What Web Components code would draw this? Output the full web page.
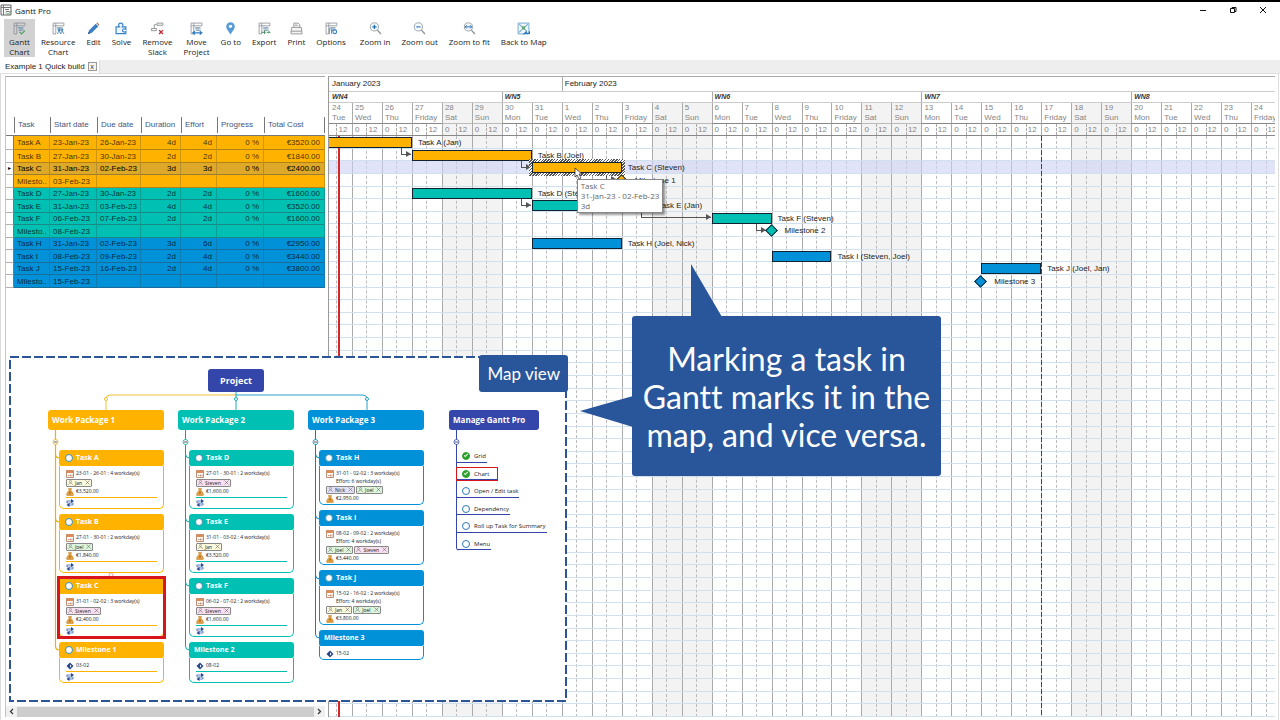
<!DOCTYPE html>
<html lang="en">
<head>
<meta charset="UTF-8">
<title>Gantt Pro</title>
<style>
    html, body {
        margin: 0;
        height: 100%;
        overflow: hidden;
        background: #fff;
    }
    body {
        --ui: "Open Sans", "Noto Sans", sans-serif;
        --grid: "Liberation Sans", Arial, sans-serif;
        --amber: #ffb300;
        --teal: #00bfb3;
        --blue: #0091d9;
        --indigo: #3546ab;
        --navy: #29569b;
        font-family: var(--ui);
        font-size: 8px;
        color: #222;
    }
</style>
</head>
<body>
<gantt-app></gantt-app>

<script>
// ---------- Data ----------
const TASKS = [
    { name: 'Task A', start: '23-Jan-23', due: '26-Jan-23', dur: '4d', effort: '4d', cost: '€3520.00', color: 'amber' },
    { name: 'Task B', start: '27-Jan-23', due: '30-Jan-23', dur: '2d', effort: '2d', cost: '€1840.00', color: 'amber' },
    { name: 'Task C', start: '31-Jan-23', due: '02-Feb-23', dur: '3d', effort: '3d', cost: '€2400.00', color: 'amber', selected: true },
    { name: 'Milestone 1', start: '03-Feb-23', color: 'amber' },
    { name: 'Task D', start: '27-Jan-23', due: '30-Jan-23', dur: '2d', effort: '2d', cost: '€1600.00', color: 'teal' },
    { name: 'Task E', start: '31-Jan-23', due: '03-Feb-23', dur: '4d', effort: '4d', cost: '€3520.00', color: 'teal' },
    { name: 'Task F', start: '06-Feb-23', due: '07-Feb-23', dur: '2d', effort: '2d', cost: '€1600.00', color: 'teal' },
    { name: 'Milestone 2', start: '08-Feb-23', color: 'teal' },
    { name: 'Task H', start: '31-Jan-23', due: '02-Feb-23', dur: '3d', effort: '6d', cost: '€2950.00', color: 'blue' },
    { name: 'Task I', start: '08-Feb-23', due: '09-Feb-23', dur: '2d', effort: '4d', cost: '€3440.00', color: 'blue' },
    { name: 'Task J', start: '15-Feb-23', due: '16-Feb-23', dur: '2d', effort: '4d', cost: '€3800.00', color: 'blue' },
    { name: 'Milestone 3', start: '15-Feb-23', color: 'blue' }
];

// Days are counted from 24 January
const BARS = [
    { row: 0, day: -1, days: 4, color: 'amber', label: 'Task A (Jan)' },
    { row: 1, day: 3, days: 4, color: 'amber', label: 'Task B (Joel)' },
    { row: 2, day: 7, days: 3, color: 'amber', label: 'Task C (Steven)', selected: true },
    { row: 3, day: 10, days: 0, color: 'amber', label: 'Milestone 1' },
    { row: 4, day: 3, days: 4, color: 'teal', label: 'Task D (Steven)' },
    { row: 5, day: 7, days: 4, color: 'teal', label: 'Task E (Jan)' },
    { row: 6, day: 13, days: 2, color: 'teal', label: 'Task F (Steven)' },
    { row: 7, day: 15, days: 0, color: 'teal', label: 'Milestone 2' },
    { row: 8, day: 7, days: 3, color: 'blue', label: 'Task H (Joel, Nick)' },
    { row: 9, day: 15, days: 2, color: 'blue', label: 'Task I (Steven, Joel)' },
    { row: 10, day: 22, days: 2, color: 'blue', label: 'Task J (Joel, Jan)' },
    { row: 11, day: 22, days: 0, color: 'blue', label: 'Milestone 3' }
];

const LINKS = [
    { row: 0, from: 3, to: 3 },
    { row: 1, from: 7, to: 7 },
    { row: 2, from: 10, to: 10, milestone: true },
    { row: 4, from: 7, to: 7 },
    { row: 5, from: 11, to: 13 },
    { row: 6, from: 15, to: 15, milestone: true }
];

const DAY_COUNT = 32;
const ROW_COUNT = 46;
const WEEKDAYS = ['Tue', 'Wed', 'Thu', 'Friday', 'Sat', 'Sun', 'Mon'];

const SHEET = '<path d="M2 2h20v5H2zM2 7v15h5V2M10 11h10M10 15h7" fill="none" stroke="#8a8f96" stroke-width="1.5"/><path d="M9 11h9M12 15h8" stroke="#5b8fbf" stroke-width="1.5"/>';
const LENS = '<circle cx="10" cy="9" r="7.5" fill="#f7fafc" stroke="#8d9299" stroke-width="1.5"/><path d="M15.500 15l6.500 7" stroke="#8d9299" stroke-width="2.500"/>';

const ICONS = {
    gantt: SHEET + '<path d="M12 18l4 4 6-6" fill="none" stroke="#4f9a63" stroke-width="2"/>',
    resource: SHEET + '<path d="M10 22l3-6 3 6M16 22l3-6 3 6" fill="none" stroke="#3b86c4" stroke-width="1.600"/><circle cx="13" cy="14" r="2" fill="#3b86c4"/><circle cx="19" cy="14" r="2" fill="#3b86c4"/>',
    edit: '<path d="M2 22l2-7L16 3l5 5L9 20z" fill="#3c7fc6"/><path d="M17 2l2-1 4 4-1 2z" fill="#a5724a"/><path d="M2 22l1-4 3 3z" fill="#27517f"/>',
    solve: '<path d="M2 21.500V9h6C5 5 7 2 10.500 2S16 5 13.500 9H20v4.500c-3-2-6-.5-6 2s3 4 6 2v4z" fill="#eef5fc" stroke="#3a84c9" stroke-width="2.200"/>',
    slack: '<path d="M11 2h11v4H11zM1 12h9v4H1zM6 11V5h4" fill="none" stroke="#8a8a8a" stroke-width="1.600"/><path d="M15 15l7 7M22 15l-7 7" stroke="#c32530" stroke-width="2.500"/>',
    move: SHEET + '<path d="M6 20h15M9 17l-4 3 4 3M18 17l4 3-4 3" fill="none" stroke="#2f7cc4" stroke-width="2"/>',
    goto: '<path d="M12 23C8 17 4 13 4 8.500a8 8 0 0 1 16 0C20 13 16 17 12 23z" fill="#559bd8"/><circle cx="12" cy="8" r="3" fill="#fff"/>',
    export: SHEET + '<path d="M6 19h8M12 16v6M16 19h6M20 17l2 2-2 2" fill="none" stroke="#3f8a5b" stroke-width="1.800"/>',
    print: '<path d="M7 10V2h8l3 3v5M3 10h18l1 8v4H2v-4zM2 17h20M9 6h5" fill="#f4f4f4" stroke="#86898c" stroke-width="1.500"/>',
    options: SHEET + '<circle cx="18" cy="18" r="3.500" fill="#fff" stroke="#2f7cc4" stroke-width="2"/><path d="M8 11v11M12 13v9" stroke="#777" stroke-width="1.500"/>',
    zoomin: LENS + '<path d="M10 5v8M6 9h8" stroke="#2472b8" stroke-width="2.500"/>',
    zoomout: LENS + '<path d="M6 9h8" stroke="#2472b8" stroke-width="2"/>',
    zoomfit: LENS + '<path d="M4 9h12M7 6L4 9l3 3M13 6l3 3-3 3" fill="none" stroke="#2472b8" stroke-width="1.800"/>',
    map: '<path d="M2 2h20v20H2z" fill="#f1f8fc" stroke="#5c9ac9" stroke-width="1.500"/><path d="M4 4l5 5M20 4l-5 5M4 19l5-5M14 13l4 4" stroke="#7aaacb" stroke-width="2"/><rect x="9" y="8" width="6" height="6" fill="#62a874"/><path d="M12 23l5-5v3h6v-4" fill="none" stroke="#2472b8" stroke-width="2"/>'
};

const TOOLS = [
    ['gantt', 'Gantt<br>Chart'], ['resource', 'Resource<br>Chart'], ['edit', 'Edit'], ['solve', 'Solve'],
    ['slack', 'Remove<br>Slack'], ['move', 'Move<br>Project'], ['goto', 'Go to'], ['export', 'Export'],
    ['print', 'Print'], ['options', 'Options']
];

const ZOOM_TOOLS = [
    ['zoomin', 'Zoom in'], ['zoomout', 'Zoom out'], ['zoomfit', 'Zoom to fit'], ['map', 'Back to Map']
];

// ---------- Title bar ----------
class TitleBar extends HTMLElement {
    constructor() {
        super();
        this.attachShadow({ mode: 'open' });
        this.shadowRoot.innerHTML = `
            <style>
                :host {
                    display: flex;
                    align-items: center;
                    height: 16px;
                    border-top: 2px solid #000;
                    gap: 3px;
                }
                .logo { width: 12px; height: 12px; }
                h1 { flex: 1; margin: 0; font-size: 8px; font-weight: 400; color: #111; }
                button {
                    width: 30px;
                    height: 14px;
                    padding: 0;
                    border: 0;
                    background: none;
                }
                button svg { display: block; margin: auto; width: 8px; height: 8px; }
                nav { display: flex; margin-right: 2px; }
            </style>
            <svg class="logo" viewBox="0 0 24 24"><path d="M2 2h20v20H2z" fill="#fafafa" stroke="#666" stroke-width="2"/>
                <path d="M7 2v20M2 7h20M10 11h8M12 15h7" stroke="#777" stroke-width="2"/><path d="M12 17l4 4 7-7" stroke="#4f9a63" fill="none" stroke-width="2"/></svg>
            <h1><slot></slot></h1>
            <nav>
                <button aria-label="Minimize"><svg viewBox="0 0 8 8"><path d="M1 4.500h6" stroke="#111"/></svg></button>
                <button aria-label="Restore"><svg viewBox="0 0 8 8"><path d="M1.500 2.500h4v4h-4zM3 2.500v-1h4v4H6" fill="none" stroke="#111"/></svg></button>
                <button aria-label="Close"><svg viewBox="0 0 8 8"><path d="M1 1l6 6M7 1L1 7" stroke="#111"/></svg></button>
            </nav>
        `;
    }
}
customElements.define('title-bar', TitleBar);

// ---------- Toolbar ----------
class ToolButton extends HTMLElement {
    constructor() {
        super();
        this.attachShadow({ mode: 'open' });
    }

    connectedCallback() {
        this.shadowRoot.innerHTML = `
            <style>
                :host { display: block; }
                button {
                    display: flex;
                    flex-direction: column;
                    align-items: center;
                    width: 100%;
                    height: 38px;
                    padding: 3px 5px 0;
                    border: 0;
                    background: none;
                    font: 8px/10px var(--ui);
                    color: #222;
                    white-space: nowrap;
                }
                :host([active]) button { background: #d2d2d2; }
                svg { width: 13px; height: 13px; margin-bottom: 2px; }
            </style>
            <button><svg viewBox="0 0 24 24">${ICONS[this.getAttribute('icon')]}</svg><span><slot></slot></span></button>
        `;
    }
}
customElements.define('tool-button', ToolButton);

class ToolBar extends HTMLElement {
    constructor() {
        super();
        this.attachShadow({ mode: 'open' });
        const tool = ([icon, label]) => `<tool-button icon="${icon}" ${icon === 'gantt' ? 'active' : ''}>${label}</tool-button>`;
        this.shadowRoot.innerHTML = `
            <style>
                :host { display: flex; gap: 4px; padding: 1px 4px 3px; }
                div { display: flex; gap: 1px; }
            </style>
            <div>${TOOLS.map(tool).join('')}</div>
            <div>${ZOOM_TOOLS.map(tool).join('')}</div>
        `;
    }
}
customElements.define('tool-bar', ToolBar);

class TabStrip extends HTMLElement {
    constructor() {
        super();
        this.attachShadow({ mode: 'open' });
        this.shadowRoot.innerHTML = `
            <style>
                :host { display: flex; height: 13px; background: #eee; border-bottom: 1px solid #e0e0e0; }
                .tab {
                    display: flex;
                    align-items: center;
                    gap: 3px;
                    padding: 0 2px 0 5px;
                    background: #fff;
                    border-right: 1px solid #ddd;
                    font: 8px var(--grid);
                    letter-spacing: normal;
                }
                button {
                    width: 9px;
                    height: 9px;
                    padding: 0;
                    border: 1px solid #999;
                    background: #f4f4f4;
                    font: 7px/7px var(--ui);
                    color: #333;
                }
            </style>
            <div class="tab"><span><slot></slot></span><button aria-label="Close tab">x</button></div>
        `;
    }
}
customElements.define('tab-strip', TabStrip);

// ---------- Task table (left pane) ----------
class TaskTable extends HTMLElement {
    constructor() {
        super();
        this.attachShadow({ mode: 'open' });
        this.shadowRoot.innerHTML = `
            <style>
                :host {
                    display: flex;
                    flex-direction: column;
                    border-left: 1px solid #c4c4c4;
                    border-top: 1px solid #aaa;
                    font: 8px/10px var(--grid);
                }
                .sheet { flex: 1; padding-top: 39px; }
                table { width: 100%; border-collapse: separate; border-spacing: 0; table-layout: fixed; }
                th, td { padding: 0; overflow: hidden; white-space: nowrap; box-sizing: border-box; }
                th {
                    height: 20px;
                    font-weight: 400;
                    text-align: left;
                    color: #46557c;
                    border-bottom: 1px solid #777;
                }
                th span { display: block; line-height: 16px; padding-left: 3px; border-left: 1px solid #777; margin: 1px 0 2px; }
                th:last-child span { border-right: 1px solid #777; }
                th:first-child span { border: 0; }
                tr { height: 12px; }
                tbody tr:nth-child(even) { height: 13px; }
                tbody tr:first-child { height: 14px; }
                td {
                    height: inherit;
                    line-height: 11px;
                    color: rgba(0, 0, 0, .75);
                    border-bottom: 1px solid rgba(60, 60, 60, .4);
                    border-right: 1px solid rgba(60, 60, 60, .25);
                }
                td:first-child { background: #fff; border-right-color: #777; font-size: 6px; text-align: center; }
                td:nth-child(n + 2) { padding-left: 3px; }
                td.num { text-align: right; padding-right: 4px; }
                tr.amber td { background: var(--amber); }
                tr.teal td { background: var(--teal); }
                tr.blue td { background: var(--blue); }
                tr.selected td { background: #dea828; color: #000; }
                tbody tr td:first-child { background: #fff; }
                .scroll { display: flex; align-items: center; height: 11px; background: #f0f0f0; }
                .scroll button { width: 11px; height: 11px; padding: 0; border: 0; background: none; }
                .scroll svg { display: block; margin: auto; width: 5px; height: 7px; }
                .thumb { flex: 1; height: 10px; background: #cdcdcd; }
            </style>
            <div class="sheet">
                <table>
                    <colgroup>
                        <col style="width:8px"><col style="width:36px"><col style="width:47px"><col style="width:44px">
                        <col style="width:40px"><col style="width:36px"><col style="width:47px"><col>
                    </colgroup>
                    <thead><tr>
                        <th><span></span></th><th><span>Task</span></th><th><span>Start date</span></th><th><span>Due date</span></th>
                        <th><span>Duration</span></th><th><span>Effort</span></th><th><span>Progress</span></th><th><span>Total Cost</span></th>
                    </tr></thead>
                    <tbody>${TASKS.map(t => this.row(t)).join('')}</tbody>
                </table>
            </div>
            <div class="scroll">
                <button aria-label="Scroll left"><svg viewBox="0 0 5 7"><path d="M4 1L1.500 3.500 4 6" fill="none" stroke="#333" stroke-width="1.200"/></svg></button>
                <div class="thumb"></div>
                <button aria-label="Scroll right"><svg viewBox="0 0 5 7"><path d="M1 1l2.500 2.500L1 6" fill="none" stroke="#333" stroke-width="1.200"/></svg></button>
            </div>
        `;
    }

    row(t) {
        const name = t.due ? t.name : 'Milesto..';
        return `<tr class="${t.color} ${t.selected ? 'selected' : ''}">
            <td>${t.selected ? '▸' : ''}</td><td>${name}</td><td>${t.start}</td><td>${t.due || ''}</td>
            <td class="num">${t.dur || ''}</td><td class="num">${t.effort || ''}</td>
            <td class="num">${t.due ? '0 %' : ''}</td><td class="num">${t.cost || ''}</td></tr>`;
    }
}
customElements.define('task-table', TaskTable);

// ---------- Gantt bar, milestone and link ----------
class GanttBar extends HTMLElement {
    constructor() {
        super();
        this.attachShadow({ mode: 'open' });
        this.shadowRoot.innerHTML = `
            <style>
                :host {
                    position: absolute;
                    display: flex;
                    align-items: center;
                    box-sizing: border-box;
                    left: calc(var(--day) * 100% / ${DAY_COUNT});
                    top: calc(var(--row) * 100% / ${ROW_COUNT} + 1px);
                    width: calc(var(--days) * 100% / ${DAY_COUNT});
                    height: 11px;
                    font: 8px/11px var(--grid);
                    color: #222;
                }
                .bar {
                    flex: none;
                    width: 100%;
                    height: 100%;
                    box-sizing: border-box;
                    border: 1px solid #123;
                    background: var(--color);
                }
                :host([selected]) .bar { position: relative; }
                :host([selected])::before {
                    content: "";
                    position: absolute;
                    inset: -3px;
                    background: repeating-linear-gradient(135deg, #555 0 1px, #fff 1px 2px);
                }
                :host([milestone]) .bar {
                    width: 9px;
                    height: 9px;
                    margin-left: -5px;
                    transform: rotate(45deg);
                }
                .label { flex: none; white-space: nowrap; padding-left: 6px; }
                :host([milestone]) .label { padding-left: 9px; }
            </style>
            <div class="bar"></div><span class="label"><slot></slot></span>
        `;
    }
}
customElements.define('gantt-bar', GanttBar);

class GanttLink extends HTMLElement {
    constructor() {
        super();
        this.attachShadow({ mode: 'open' });
        this.shadowRoot.innerHTML = `
            <style>
                :host {
                    position: absolute;
                    box-sizing: border-box;
                    left: calc(var(--from) * 100% / ${DAY_COUNT} - 11px);
                    top: calc(var(--row) * 100% / ${ROW_COUNT} + 12px);
                    width: calc((var(--to) - var(--from)) * 100% / ${DAY_COUNT} + 10px);
                    height: 7px;
                    border: solid #555;
                    border-width: 0 0 1px 1px;
                }
                :host([milestone]) { margin-left: -5px; }
                i {
                    position: absolute;
                    right: 0;
                    bottom: -3px;
                    border: solid transparent;
                    border-width: 3px 0 3px 5px;
                    border-left-color: #555;
                }
            </style><i></i>
        `;
    }
}
customElements.define('gantt-link', GanttLink);

// ---------- Gantt chart (right pane) ----------
class GanttChart extends HTMLElement {
    constructor() {
        super();
        this.attachShadow({ mode: 'open' });

        let days = '', hours = '', cols = '', rows = '';
        for (let i = 0; i < DAY_COUNT; i++) {
            const num = i < 8 ? 24 + i : i - 7;
            const off = i % 7 === 4 || i % 7 === 5 ? 'off' : '';
            days += `<div class="${off}">${num}<br>${WEEKDAYS[i % 7]}</div>`;
            hours += `<div class="${off}"><span>${i ? 0 : ''}</span><span>12</span></div>`;
            cols += `<div class="${off}"><i></i></div>`;
        }
        for (let i = 0; i < ROW_COUNT; i++) {
            rows += `<div class="${i === 2 ? 'current' : ''}"></div>`;
        }

        this.shadowRoot.innerHTML = `
            <style>
                :host {
                    display: flex;
                    flex-direction: column;
                    overflow: hidden;
                    border-top: 1px solid #aaa;
                    border-left: 1px solid #999;
                    font: 8px/10px var(--grid);
                }
                .line { display: grid; grid-template-columns: repeat(${DAY_COUNT}, 1fr); margin: 0 -6px 0 -7px; flex: none; }
                .line > div { box-sizing: border-box; padding-left: 2px; white-space: nowrap; border-left: 1px solid #aaa; min-width: 0; }
                .line > div:first-child { padding-left: 9px; }
                .months, .weeks { border-bottom: 1px solid #ccc; }
                .months { line-height: 14px; }
                .weeks { line-height: 10px; font-style: italic; font-weight: 700; font-size: 7px; color: #333; }
                .days { color: #858585; }
                .days > div { border-bottom: 1px solid #888; }
                .days > .off { border-bottom-color: #bbb; }
                .hours { color: #858585; border-bottom: 1px solid #888; }
                .hours > div { display: flex; line-height: 11px; padding: 0; }
                .hours > div:first-child { padding: 0; }
                .hours span { flex: 1; border-left: 1px dashed #aaa; margin-left: -2px; padding-left: 1px; }
                .hours span:first-child { border: 0; margin: 0; padding-left: 2px; }
                .off { background: #f3f3f3; }
                .body { flex: 1; display: grid; margin: 0 -6px 0 -7px; }
                .layer { grid-area: 1 / 1; display: grid; position: relative; }
                .cols { grid-template-columns: repeat(${DAY_COUNT}, 1fr); }
                .cols > div { border-left: 1px solid #aaa; }
                .cols i { display: block; height: 100%; width: 50%; box-sizing: border-box; border-right: 1px dashed #bbb; }
                .rows { grid-template-rows: repeat(${ROW_COUNT}, 1fr); }
                .rows > div { border-bottom: 1px solid #d0e0ec; min-height: 0; }
                .rows .current { background: rgba(205, 210, 245, .6); }
                .now, .end { position: absolute; top: 0; bottom: 0; left: calc(var(--day) * 100% / ${DAY_COUNT}); }
                .now { margin-left: 16px; border-left: 2px solid #d3262b; }
                .end { width: 1px; background: repeating-linear-gradient(#3a31c8 0 5px, #c9c6f2 5px 7px); }
                .tip {
                    position: absolute;
                    left: calc(10 * 100% / ${DAY_COUNT} - 45px);
                    top: 43px;
                    padding: 1px 3px;
                    border: 1px solid #888;
                    background: #fff;
                    box-shadow: 2px 2px 2px rgba(0, 0, 0, .4);
                    font: 8px/10px var(--ui);
                    color: #666;
                    white-space: nowrap;
                }
                .cursor { position: absolute; left: calc(10 * 100% / ${DAY_COUNT} - 48px); top: 31px; width: 9px; height: 13px; }
            </style>
            <div class="line months">
                <div style="grid-column: span 8">January 2023</div>
                <div style="grid-column: span 24">February 2023</div>
            </div>
            <div class="line weeks">
                <div style="grid-column: span 6">WN4</div>
                <div style="grid-column: span 7">WN5</div>
                <div style="grid-column: span 7">WN6</div>
                <div style="grid-column: span 7">WN7</div>
                <div style="grid-column: span 5">WN8</div>
            </div>
            <div class="line days">${days}</div>
            <div class="line hours">${hours}</div>
            <div class="body">
                <div class="layer cols">${cols}</div>
                <div class="layer rows">${rows}</div>
                <div class="layer">
                    <div class="now" style="--day: 0"></div>
                    <div class="end" style="--day: 24"></div>
                    ${LINKS.map(l => `<gantt-link ${l.milestone ? 'milestone' : ''} style="--row:${l.row};--from:${l.from};--to:${l.to}"></gantt-link>`).join('')}
                    ${BARS.map(b => `<gantt-bar ${b.selected ? 'selected' : ''} ${b.days ? '' : 'milestone'}
                        style="--row:${b.row};--day:${b.day};--days:${b.days};--color:var(--${b.color})">${b.label}</gantt-bar>`).join('')}
                    <div class="tip" role="tooltip">Task C<br>31-Jan-23 - 02-Feb-23<br>3d</div>
                    <svg class="cursor" viewBox="0 0 9 13"><path d="M1 1v9l2-2 2 4 2-1-2-4h3z" fill="#fff" stroke="#333" stroke-width=".8"/></svg>
                </div>
            </div>
        `;
    }
}
customElements.define('gantt-chart', GanttChart);

// ---------- Map cards ----------
const CALENDAR = '<svg viewBox="0 0 16 16"><path d="M1 1h14v14H1z" fill="#fff" stroke="#a9694a" stroke-width="1.500"/><path d="M1 1h14v5H1z" fill="#d98c58"/><path d="M4 11h3M9 9v4M12 9v4" stroke="#a9694a" stroke-width="1.500"/></svg>';
const MONEY = '<svg viewBox="0 0 16 16"><path d="M5 1h6l-1 4c4 3 6 10 4 10H2C0 15 2 8 6 5z" fill="#e3a03c" stroke="#b97a28"/><path d="M8 7v6M6 9h4" stroke="#8a5a1a"/></svg>';
const DEPEND = '<svg viewBox="0 0 16 16"><path d="M1 4h11M2 4v4h12v4H5" fill="none" stroke="#5f83bd" stroke-width="2"/><path d="M10 0l6 4-6 4zM7 8l-6 4 6 4z" fill="#27468a"/></svg>';
const DIAMOND = '<svg viewBox="0 0 16 16"><path d="M8 1l7 7-7 7-7-7z" fill="#27468a"/><path d="M8 5l3 3-3 3z" fill="#fff"/></svg>';

class PersonTag extends HTMLElement {
    constructor() {
        super();
        this.attachShadow({ mode: 'open' });
        this.shadowRoot.innerHTML = `
            <style>
                :host {
                    display: flex;
                    align-items: center;
                    height: 8px;
                    box-sizing: border-box;
                    padding: 0 1px;
                    border: 1px solid #888;
                    border-radius: 1px;
                    gap: 2px;
                    font-size: 5px;
                    line-height: 6px;
                    background: var(--tint);
                }
                svg { width: 5px; height: 5px; }
                button { width: 5px; height: 5px; padding: 0; border: 0; background: none; display: flex; margin-left: 1px; }
            </style>
            <svg viewBox="0 0 10 10"><circle cx="5" cy="3" r="2" fill="none" stroke="#666"/><path d="M1 10c0-5 8-5 8 0" fill="none" stroke="#666"/></svg>
            <slot></slot>
            <button aria-label="Remove"><svg viewBox="0 0 10 10"><path d="M1 1l8 8M9 1L1 9" stroke="#555"/></svg></button>
        `;
    }
}
customElements.define('person-tag', PersonTag);

const TINTS = { Jan: '#fdf9dc', Joel: '#dcf5dc', Steven: '#f8e0f0', Nick: '#e3e1f8' };

class MapCard extends HTMLElement {
    constructor() {
        super();
        this.attachShadow({ mode: 'open' });
    }

    connectedCallback() {
        const get = name => this.getAttribute(name);
        const people = get('people') ? get('people').split(',') : [];
        const title = get('check') === null
            ? `<span>${get('name')}</span>`
            : `<label><input type="checkbox">${get('name')}</label>`;

        this.shadowRoot.innerHTML = `
            <style>
                :host { display: block; background: #fff; font-size: 5px; line-height: 9px; color: #222; border-radius: 4px; }
                :host([marked]) { outline: 3px solid #d8141c; outline-offset: -1px; border-radius: 0; }
                header {
                    height: 16px;
                    padding: 0 5px;
                    border-radius: 3px 3px 2px 2px;
                    background: var(--color);
                    color: #fff;
                    font-size: 7px;
                    font-weight: 700;
                    line-height: 16px;
                }
                label { display: flex; align-items: center; gap: 3px; padding-left: 1px; }
                input {
                    appearance: none;
                    box-sizing: border-box;
                    width: 8px;
                    height: 8px;
                    margin: 0;
                    border: 1px solid #3a8fae;
                    border-radius: 50%;
                    background: #fff;
                }
                .body {
                    padding: 3px 6px 1px;
                    border: 1px solid var(--color);
                    border-top: 0;
                    border-radius: 0 0 5px 5px;
                }
                .row { display: flex; align-items: center; height: 9px; gap: 2px; white-space: nowrap; }
                .row svg { width: 8px; height: 8px; }
                .effort { height: 7px; padding-left: 10px; line-height: 7px; }
                .people { gap: 1px; }
                .deps { margin-top: 1px; border-top: 1px solid var(--color); }
            </style>
            <header>${title}</header>
            <div class="body">
                <div class="row">${get('cost') ? CALENDAR : DIAMOND}<span>${get('date')}</span></div>
                ${get('effort') ? `<div class="effort">Effort: ${get('effort')} workday(s)</div>` : ''}
                ${people.length ? `<div class="row people">${people.map(p => `<person-tag style="--tint:${TINTS[p]}">${p}</person-tag>`).join('')}</div>` : ''}
                ${get('cost') ? `<div class="row">${MONEY}<span>${get('cost')}</span></div>` : ''}
                ${get('deps') !== null ? `<div class="row deps">${DEPEND}</div>` : ''}
            </div>
        `;
    }
}
customElements.define('map-card', MapCard);

class MapBranch extends HTMLElement {
    constructor() {
        super();
        this.attachShadow({ mode: 'open' });
    }

    connectedCallback() {
        this.shadowRoot.innerHTML = `
            <style>
                :host { display: block; width: 116px; }
                h3 {
                    margin: 0;
                    height: 20px;
                    padding: 0 4px;
                    border-radius: 3px;
                    background: var(--color);
                    color: #fff;
                    font-size: 8px;
                    line-height: 20px;
                    white-space: nowrap;
                }
                .cards { display: flex; flex-direction: column; gap: 5px; margin: 20px 0 0 11px; }
            </style>
            <h3>${this.getAttribute('name')}</h3>
            <div class="cards"><slot></slot></div>
        `;
    }
}
customElements.define('map-branch', MapBranch);

class TopicList extends HTMLElement {
    constructor() {
        super();
        this.attachShadow({ mode: 'open' });
        const topics = ['Grid', 'Chart', 'Open / Edit task', 'Dependency', 'Roll up Task for Summary', 'Menu'];
        this.shadowRoot.innerHTML = `
            <style>
                :host { display: block; width: 90px; }
                h3 {
                    margin: 0;
                    height: 20px;
                    padding: 0 4px;
                    border-radius: 3px;
                    background: var(--indigo);
                    color: #fff;
                    font-size: 8px;
                    line-height: 20px;
                    white-space: nowrap;
                }
                ul {
                    display: grid;
                    grid-template-rows: repeat(6, 1fr);
                    justify-items: start;
                    align-items: end;
                    height: 105px;
                    margin: 15px 0 0 8px;
                    padding: 0;
                    list-style: none;
                }
                label {
                    display: flex;
                    align-items: center;
                    gap: 4px;
                    height: 11px;
                    padding: 0 1px 0 5px;
                    border-bottom: 1px solid var(--indigo);
                    font-size: 6px;
                    white-space: nowrap;
                }
                .marked { outline: 1px solid #d8141c; padding-right: 8px; }
                input {
                    appearance: none;
                    box-sizing: border-box;
                    width: 8px;
                    height: 8px;
                    margin: 0;
                    border: 1px solid #2c78b8;
                    border-radius: 50%;
                }
                input:checked { border-color: #2da12d; background: #2da12d; position: relative; }
                input:checked::after {
                    content: "";
                    position: absolute;
                    left: 1px;
                    top: 1px;
                    width: 3px;
                    height: 1px;
                    border: solid #fff;
                    border-width: 0 0 1px 1px;
                    transform: rotate(-45deg);
                }
            </style>
            <h3>Manage Gantt Pro</h3>
            <ul>${topics.map((t, i) => `<li><label class="${i === 1 ? 'marked' : ''}"><input type="checkbox" ${i < 2 ? 'checked' : ''}>${t}</label></li>`).join('')}</ul>
        `;
    }
}
customElements.define('topic-list', TopicList);

// ---------- Map view ----------
class MapView extends HTMLElement {
    constructor() {
        super();
        this.attachShadow({ mode: 'open' });
        const fold = (x, color) => `<circle cx="${x}" cy="85" r="2.500" fill="#fff" stroke="${color}" stroke-width=".8"/><path d="M${x - 1.5} 85h3" stroke="#333" stroke-width=".8"/>`;
        this.shadowRoot.innerHTML = `
            <style>
                :host { display: block; position: relative; background: #fff; padding: 12px 27px 18px 38px; }
                .lines, .frame { position: absolute; left: 0; top: 0; width: 100%; height: 100%; overflow: visible; }
                h2 {
                    position: relative;
                    width: 56px;
                    height: 23px;
                    margin: 0 0 18px 160px;
                    border-radius: 3px;
                    background: var(--indigo);
                    color: #fff;
                    font-size: 9px;
                    line-height: 23px;
                    text-align: center;
                }
                .branches { position: relative; display: flex; gap: 14px; align-items: flex-start; }
                topic-list { margin-left: 11px; }
                .name {
                    position: absolute;
                    right: -2px;
                    top: -2px;
                    padding: 0 8px;
                    border-radius: 3px;
                    background: var(--navy);
                    color: #fff;
                    font: 17px/37px Lato, sans-serif;
                }
            </style>
            <svg class="lines" fill="none">
                <path d="M226 38H100q-4 0-4 4v12" stroke="#f0c030"/>
                <path d="M226 38h127q4 0 4 4v12" stroke="#2a9fc8"/>
                <path d="M226 34v20" stroke="#16b0b0"/>
                <circle cx="96" cy="42" r="1.500" fill="#fff" stroke="#f0c030"/>
                <circle cx="226" cy="42" r="1.500" fill="#fff" stroke="#16b0b0"/>
                <circle cx="357" cy="42" r="1.500" fill="#fff" stroke="#2a9fc8"/>
                <path d="M45.500 72v217q0 4 4 4M45.500 97q0 4 4 4M45.500 161q0 4 4 4" stroke="#f0ac10" stroke-width="1.200"/>
                <path d="M175.500 72v217q0 4 4 4M175.500 97q0 4 4 4M175.500 161q0 4 4 4M175.500 225q0 4 4 4" stroke="#00aaa0"/>
                <path d="M305.500 72v205q0 4 4 4M305.500 97q0 4 4 4M305.500 158q0 4 4 4M305.500 218q0 4 4 4" stroke="#0082c8"/>
                <path d="M446.500 72v119q0 2 2 2" stroke="#3546ab"/>
                <circle cx="101" cy="218" r="2" stroke="#e8a0a0"/>
                ${fold(45.5, '#f0ac10')}${fold(175.5, '#00aaa0')}${fold(305.5, '#0082c8')}${fold(446.5, '#3546ab')}
            </svg>
            <svg class="frame"><rect width="100%" height="100%" fill="none" stroke="#2b5594" stroke-width="2" stroke-dasharray="9 3"/></svg>
            <h2>Project</h2>
            <div class="branches">
                <map-branch name="Work Package 1" style="--color: var(--amber)">
                    <map-card check deps name="Task A" date="23-01 - 26-01 : 4 workday(s)" people="Jan" cost="€3,520.00"></map-card>
                    <map-card check deps name="Task B" date="27-01 - 30-01 : 2 workday(s)" people="Joel" cost="€1,840.00"></map-card>
                    <map-card check deps marked name="Task C" date="31-01 - 02-02 : 3 workday(s)" people="Steven" cost="€2,400.00"></map-card>
                    <map-card check deps name="Milestone 1" date="03-02"></map-card>
                </map-branch>
                <map-branch name="Work Package 2" style="--color: var(--teal)">
                    <map-card check deps name="Task D" date="27-01 - 30-01 : 2 workday(s)" people="Steven" cost="€1,600.00"></map-card>
                    <map-card check deps name="Task E" date="31-01 - 03-02 : 4 workday(s)" people="Jan" cost="€3,520.00"></map-card>
                    <map-card check deps name="Task F" date="06-02 - 07-02 : 2 workday(s)" people="Steven" cost="€1,600.00"></map-card>
                    <map-card deps name="Milestone 2" date="08-02"></map-card>
                </map-branch>
                <map-branch name="Work Package 3" style="--color: var(--blue)">
                    <map-card check name="Task H" date="31-01 - 02-02 : 3 workday(s)" effort="6" people="Nick,Joel" cost="€2,950.00"></map-card>
                    <map-card check name="Task I" date="08-02 - 09-02 : 2 workday(s)" effort="4" people="Joel,Steven" cost="€3,440.00"></map-card>
                    <map-card check name="Task J" date="15-02 - 16-02 : 2 workday(s)" effort="4" people="Jan,Joel" cost="€3,800.00"></map-card>
                    <map-card name="Milestone 3" date="15-02"></map-card>
                </map-branch>
                <topic-list></topic-list>
            </div>
            <div class="name">Map view</div>
        `;
    }
}
customElements.define('map-view', MapView);

// ---------- Speech bubble with two pointers ----------
class CallOut extends HTMLElement {
    constructor() {
        super();
        this.attachShadow({ mode: 'open' });
        this.shadowRoot.innerHTML = `
            <style>
                :host {
                    display: block;
                    box-sizing: border-box;
                    width: 309px;
                    padding: 24px 0 22px;
                    border-radius: 3px;
                    background: var(--navy);
                    color: #fff;
                    font: 32px/38px Lato, sans-serif;
                    font-variant-ligatures: none;
                    text-align: center;
                    white-space: nowrap;
                }
                svg { position: absolute; left: -52px; top: -52px; width: 142px; height: 163px; fill: var(--navy); }
            </style>
            <svg viewBox="0 0 142 163"><path d="M111 0v53h31zM0 147l53-15v31z"/></svg>
            <slot></slot>
        `;
    }
}
customElements.define('call-out', CallOut);

// ---------- Window ----------
class GanttApp extends HTMLElement {
    constructor() {
        super();
        this.attachShadow({ mode: 'open' });
        this.shadowRoot.innerHTML = `
            <style>
                :host { display: flex; flex-direction: column; height: 100vh; }
                main {
                    flex: 1;
                    min-height: 0;
                    display: grid;
                    grid-template-columns: 320px minmax(0, 1fr);
                    gap: 3px;
                    padding: 2px 3px 3px 4px;
                    border: solid #ddd;
                    border-width: 0 1px 0 1px;
                    margin-right: 1px;
                }
                map-view { position: absolute; left: 10px; top: 357px; }
                call-out { position: absolute; left: 632px; top: 316px; }
            </style>
            <title-bar>Gantt Pro</title-bar>
            <tool-bar></tool-bar>
            <tab-strip>Example 1 Quick build</tab-strip>
            <main>
                <task-table></task-table>
                <gantt-chart></gantt-chart>
            </main>
            <map-view></map-view>
            <call-out>Marking a task in<br>Gantt marks it in the<br>map, and vice versa.</call-out>
        `;
    }
}
customElements.define('gantt-app', GanttApp);
</script>
</body>
</html>
